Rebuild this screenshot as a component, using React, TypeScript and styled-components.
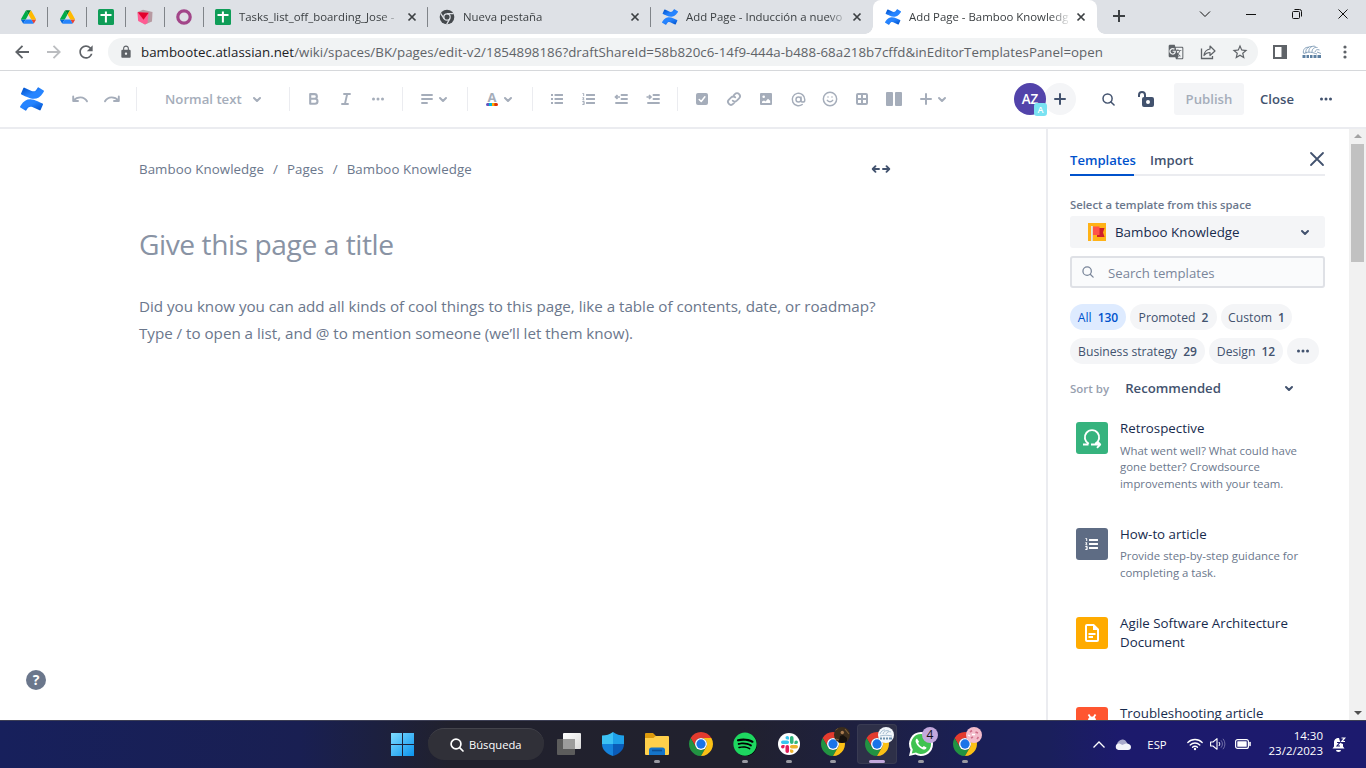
import React from 'react';
import styled, { createGlobalStyle } from 'styled-components';
import { AtSign, Smile } from 'lucide-react';
import { MdGTranslate, MdLock, MdStarOutline, MdRefresh } from 'react-icons/md';
import { FaSpotify } from 'react-icons/fa';

const Global = createGlobalStyle`
  * { box-sizing: border-box; }
  body {
    margin: 0;
    overflow: hidden;
    background: #fff;
    font-family: "Open Sans", "Noto Sans", sans-serif;
  }
  svg { display: block; flex: none; overflow: visible; }
`;

/* ---------- shared pieces ---------- */

const Screen = styled.div`
  width: 1366px;
  height: 768px;
  display: flex;
  flex-direction: column;
  overflow: hidden;
`;

const Slot = styled.div<{ $w?: number }>`
  flex: none;
  width: ${(p) => p.$w ?? 32}px;
  height: 32px;
  display: flex;
  align-items: center;
  justify-content: center;
`;

const Text = styled.span<{ $size: number; $color: string; $weight?: number; $ls?: number }>`
  font-size: ${(p) => p.$size}px;
  color: ${(p) => p.$color};
  font-weight: ${(p) => p.$weight ?? 400};
  letter-spacing: ${(p) => p.$ls ?? 0}px;
  white-space: nowrap;
`;

type SvgProps = { w?: number; h?: number; box?: string; children: React.ReactNode };
const Svg = ({ w = 16, h, box, children }: SvgProps) => (
  <svg width={w} height={h ?? w} viewBox={box ?? `0 0 ${w} ${h ?? w}`} fill="none">
    {children}
  </svg>
);

const ConfluenceLogo = ({ size }: { size: number }) => (
  <Svg w={size} box="0 0 24 24">
    <defs>
      <linearGradient id="cfLow" x1="1" y1="0.9" x2="0.3" y2="0.2">
        <stop offset="0" stopColor="#0052cc" />
        <stop offset="0.7" stopColor="#2684ff" />
      </linearGradient>
      <linearGradient id="cfTop" x1="0" y1="0.1" x2="0.7" y2="0.8">
        <stop offset="0" stopColor="#0052cc" />
        <stop offset="0.7" stopColor="#2684ff" />
      </linearGradient>
    </defs>
    <path
      fill="url(#cfLow)"
      d="M.87 18.257c-.248.382-.53.875-.763 1.245a.764.764 0 0 0 .255 1.04l4.965 3.054a.764.764 0 0 0 1.058-.26c.199-.332.454-.763.733-1.221 1.967-3.247 3.945-2.853 7.508-1.146l4.957 2.337a.764.764 0 0 0 1.028-.382l2.364-5.346a.764.764 0 0 0-.382-1 599.851 599.851 0 0 1-4.965-2.361C10.911 10.97 5.224 11.185.87 18.257z"
    />
    <path
      fill="url(#cfTop)"
      d="M23.131 5.743c.249-.405.531-.875.764-1.25a.764.764 0 0 0-.256-1.034L18.675.404a.764.764 0 0 0-1.058.26c-.195.335-.451.763-.734 1.225-1.966 3.246-3.945 2.85-7.508 1.146L4.437.694a.764.764 0 0 0-1.027.382L1.046 6.422a.764.764 0 0 0 .382 1c1.039.49 3.105 1.467 4.965 2.361 6.698 3.246 12.392 3.029 16.738-4.04z"
    />
  </Svg>
);

const Chevron = ({ color, size = 8, sw = 2 }: { color: string; size?: number; sw?: number }) => (
  <Svg w={size} h={size / 2 + 1} box="0 0 8 5">
    <path d="M1 1l3 3 3-3" stroke={color} strokeWidth={sw} strokeLinecap="round" strokeLinejoin="round" />
  </Svg>
);

const Dots = ({ color }: { color: string }) => (
  <Svg w={12} h={4}>
    <circle cx="1.5" cy="2" r="1.5" fill={color} />
    <circle cx="6" cy="2" r="1.5" fill={color} />
    <circle cx="10.5" cy="2" r="1.5" fill={color} />
  </Svg>
);

const Magnifier = ({ color, size = 14, sw = 1.6 }: { color: string; size?: number; sw?: number }) => (
  <Svg w={size} box="0 0 14 14">
    <circle cx="6" cy="6" r="4.9" stroke={color} strokeWidth={sw} />
    <path d="M9.6 9.6l3.4 3.4" stroke={color} strokeWidth={sw} strokeLinecap="round" />
  </Svg>
);

const ChromeLogo = ({ size = 24 }: { size?: number }) => (
  <Svg w={size} box="0 0 48 48">
    <path fill="#e33b2e" d="M24 12H44.78A24 24 0 0 0 3.22 12L13.61 30A12 12 0 0 1 24 12z" />
    <path fill="#229342" d="M13.61 30L3.22 12A24 24 0 0 0 24 48L34.39 30A12 12 0 0 1 13.61 30z" />
    <path fill="#fbc116" d="M34.39 30L24 48A24 24 0 0 0 44.78 12H24A12 12 0 0 1 34.39 30z" />
    <circle cx="24" cy="24" r="12" fill="#fff" />
    <circle cx="24" cy="24" r="9.3" fill="#1a73e8" />
  </Svg>
);

/* ---------- browser tabs ---------- */

const TabStrip = styled.div`
  flex: none;
  height: 34px;
  padding-left: 9px;
  background: #dee1e6;
  display: flex;
`;

const PinnedTab = styled.div`
  flex: none;
  width: 39px;
  height: 34px;
  padding-right: 1px;
  display: flex;
  align-items: center;
  justify-content: center;
  background: linear-gradient(#808489, #808489) 38px 7px / 1px 20px no-repeat;
`;

const Tab = styled.div<{ $w: number; $active?: boolean; $line?: boolean }>`
  flex: none;
  position: relative;
  width: ${(p) => p.$w}px;
  height: 34px;
  padding: 0 12px 0 ${(p) => (p.$active ? 12 : 11)}px;
  display: flex;
  align-items: center;
  border-radius: 8px 8px 0 0;
  background: ${(p) =>
    p.$active
      ? '#fff'
      : p.$line
        ? `linear-gradient(#808489, #808489) ${p.$w - 1}px 7px / 1px 20px no-repeat`
        : 'none'};
  ${(p) =>
    p.$active &&
    `&::before, &::after {
      content: "";
      position: absolute;
      bottom: 0;
      width: 8px;
      height: 8px;
    }
    &::before { left: -8px; background: radial-gradient(circle at 0 0, transparent 7.5px, #fff 8px); }
    &::after { right: -8px; background: radial-gradient(circle at 100% 0, transparent 7.5px, #fff 8px); }`}
`;

const TabTitle = styled.div<{ $ls?: number }>`
  width: 160px;
  margin-left: 8px;
  white-space: nowrap;
  font-size: 11.4px;
  line-height: 18px;
  letter-spacing: ${(p) => p.$ls ?? 0}px;
  color: #3c4043;
  mask-image: linear-gradient(90deg, #000 142px, transparent 162px);
`;

const TabClose = styled.div`
  flex: none;
  margin-left: auto;
  width: 8px;
`;

const WindowControls = styled.div`
  margin-left: auto;
  height: 28px;
  display: flex;
  align-items: center;
`;

const DriveIcon = () => (
  <Svg w={15} h={14} box="0 0 87.3 78">
    <path fill="#0066da" d="M6.6 66.85l3.85 6.65c.8 1.4 1.95 2.5 3.3 3.3L27.5 53H0c0 1.55.4 3.1 1.2 4.5z" />
    <path fill="#00ac47" d="M43.65 25L29.9 1.2c-1.35.8-2.5 1.9-3.3 3.3L1.2 48.5A9 9 0 0 0 0 53h27.5z" />
    <path fill="#ea4335" d="M73.55 76.8c1.35-.8 2.5-1.9 3.3-3.3l1.6-2.75L86.1 57.5c.8-1.4 1.2-2.95 1.2-4.5H59.8l5.85 11.5z" />
    <path fill="#00832d" d="M43.65 25L57.4 1.2C56.05.4 54.5 0 52.9 0H34.4c-1.6 0-3.15.45-4.5 1.2z" />
    <path fill="#2684fc" d="M59.8 53H27.5L13.75 76.8c1.35.8 2.9 1.2 4.5 1.2h50.8c1.6 0 3.15-.45 4.5-1.2z" />
    <path fill="#ffba00" d="M73.4 26.5l-12.7-22c-.8-1.4-1.95-2.5-3.3-3.3L43.65 25 59.8 53h27.45c0-1.55-.4-3.1-1.2-4.5z" />
  </Svg>
);

const SheetIcon = () => (
  <Svg w={16}>
    <rect width="16" height="16" rx="1.5" fill="#0f9d58" />
    <path d="M7.9 2.5v11M2.5 5.9h11" stroke="#fff" strokeWidth="2" />
  </Svg>
);

const CubeIcon = () => (
  <Svg w={16}>
    <path d="M6 .8L15.500 3 15 12.500 8 15.500 1 11 .6 3z" fill="#b79aa2" />
    <path d="M.6 3.200l11 .8L10.500 14 8 15.500 1.200 12z" fill="#ff5c93" />
    <path d="M.8 3.200l10.900 .6L6.500 10.800z" fill="#e3002b" />
  </Svg>
);

const CrossIcon = ({ color = '#3c4043', size = 8, sw = 1.7 }: { color?: string; size?: number; sw?: number }) => (
  <Svg w={size}>
    <path d={`M.5 .5L${size - 0.5} ${size - 0.5}M${size - 0.5} .5L.5 ${size - 0.5}`} stroke={color} strokeWidth={sw} />
  </Svg>
);

const DarkChrome = () => (
  <Svg w={16} box="0 0 48 48">
    <circle cx="24" cy="24" r="22" fill="#45494d" />
    <circle cx="24" cy="24" r="9.5" stroke="#dee1e6" strokeWidth="3.6" />
    <path d="M24 14H44M15.5 29.5L5 13M32.500 29L23 46" stroke="#dee1e6" strokeWidth="3.6" />
  </Svg>
);

const Tabs = () => (
  <TabStrip>
    <PinnedTab><DriveIcon /></PinnedTab>
    <PinnedTab><DriveIcon /></PinnedTab>
    <PinnedTab><SheetIcon /></PinnedTab>
    <PinnedTab><CubeIcon /></PinnedTab>
    <PinnedTab>
      <Svg w={16}><circle cx="8" cy="8" r="6.2" stroke="#a24689" strokeWidth="3.2" /></Svg>
    </PinnedTab>
    <Tab $w={224} $line>
      <SheetIcon />
      <TabTitle>Tasks_list_off_boarding_Jose -</TabTitle>
      <TabClose><CrossIcon /></TabClose>
    </Tab>
    <Tab $w={223} $line>
      <DarkChrome />
      <TabTitle>Nueva pestaña</TabTitle>
      <TabClose><CrossIcon /></TabClose>
    </Tab>
    <Tab $w={222}>
      <ConfluenceLogo size={16} />
      <TabTitle>Add Page - Inducción a nuevo</TabTitle>
      <TabClose><CrossIcon /></TabClose>
    </Tab>
    <Tab $w={224} $active>
      <ConfluenceLogo size={16} />
      <TabTitle>Add Page - Bamboo Knowledg</TabTitle>
      <TabClose><CrossIcon /></TabClose>
    </Tab>
    <Slot $w={44}>
      <Svg w={12}><path d="M6 0v12M0 6h12" stroke="#3c4043" strokeWidth="2" /></Svg>
    </Slot>
    <WindowControls>
      <Slot $w={46}><Svg w={10} h={6}><path d="M0 .5l5 5 5-5" stroke="#111" /></Svg></Slot>
      <Slot $w={46}><Svg w={10} h={1}><path d="M0 .5h10" stroke="#111" /></Svg></Slot>
      <Slot $w={46}>
        <Svg w={10}>
          <rect x=".5" y="2.5" width="7" height="7" rx="1" stroke="#111" />
          <path d="M2.500 .5H7.500a2 2 0 0 1 2 2V7.500" stroke="#111" />
        </Svg>
      </Slot>
      <Slot $w={46}><CrossIcon color="#111" size={10} sw={1} /></Slot>
    </WindowControls>
  </TabStrip>
);

/* ---------- address bar ---------- */

const AddressRow = styled.div`
  flex: none;
  height: 37px;
  padding: 0 5px 1px 6px;
  border-bottom: 1px solid #d6d8db;
  display: flex;
  align-items: center;
`;

const UrlPill = styled.div`
  flex: none;
  width: 1150px;
  height: 28px;
  margin-left: 6px;
  padding: 0 2px 0 11px;
  border-radius: 14px;
  background: #f1f3f4;
  display: flex;
  align-items: center;
`;

const Url = styled.div`
  margin: 0 auto 0 8px;
  white-space: nowrap;
  font-size: 13.3px;
  line-height: 20px;
  color: #5f6368;
  letter-spacing: 0.035px;
`;

const Host = styled.span`
  color: #202124;
`;

const AddressBar = () => (
  <AddressRow>
    <Slot>
      <Svg w={14}><path d="M14 7H1.500M7.500 .8L1.300 7l6.200 6.200" stroke="#5f6368" strokeWidth="1.800" /></Svg>
    </Slot>
    <Slot>
      <Svg w={14}><path d="M0 7H12.500M6.500 .8L12.700 7l-6.200 6.200" stroke="#bbbdc0" strokeWidth="1.800" /></Svg>
    </Slot>
    <Slot><MdRefresh size={20} color="#5f6368" /></Slot>
    <UrlPill>
      <MdLock size={14} color="#5f6368" />
      <Url>
        <Host>bambootec.atlassian.net</Host>
        /wiki/spaces/BK/pages/edit-v2/1854898186?draftShareId=58b820c6-14f9-444a-b488-68a218b7cffd&amp;inEditorTemplatesPanel=open
      </Url>
      <Slot><MdGTranslate size={16} color="#5f6368" /></Slot>
      <Slot>
        <Svg w={16}>
          <path d="M1.500 4.500V14.500H12.500V12" stroke="#5f6368" strokeWidth="1.300" />
          <path d="M4 11.500C4.500 7.500 6.500 5.500 10 5V2l5 5-5 4.500V8.500C7.500 8.500 5.500 9.500 4 11.500z" stroke="#5f6368" strokeWidth="1.200" strokeLinejoin="round" />
        </Svg>
      </Slot>
      <Slot><MdStarOutline size={18} color="#5f6368" /></Slot>
    </UrlPill>
    <Slot $w={44}>
      <Svg w={14}><path fillRule="evenodd" fill="#5f6368" d="M0 0H14V14H0zM2 2V12H8.500V2z" /></Svg>
    </Slot>
    <Slot $w={20}>
      <Svg w={20} h={16}>
        <path d="M1.500 9.500C.5 5 4 2.500 7 3.500M4 9.500c-1-4 2-7.500 6-7M7 8.500c-1-4 3-7.500 6.500-6M10 8c0-3 2-5 5.500-4.500M13 8c.5-2 2-3 4.500-2M2 9.500c4-2.500 9-1 13 .5M15 8l4 1.500" stroke="#7e9bb5" strokeWidth=".9" />
        <path d="M.5 12.500h3M4.500 12.500h2.500M8 12.500h2.500M11.500 12.500h3M15.500 12.500h3.500" stroke="#5d80a2" strokeWidth="3" />
      </Svg>
    </Slot>
    <Slot $w={46}>
      <Svg w={4} h={14}>
        <circle cx="2" cy="2" r="1.600" fill="#5f6368" />
        <circle cx="2" cy="7" r="1.600" fill="#5f6368" />
        <circle cx="2" cy="12" r="1.600" fill="#5f6368" />
      </Svg>
    </Slot>
  </AddressRow>
);

/* ---------- editor toolbar ---------- */

const MUTED = '#a5adba';
const DARK = '#42526e';

const ToolbarRow = styled.div`
  flex: none;
  height: 58px;
  padding: 0 24px 0 16px;
  border-bottom: 2px solid #ebecf0;
  display: flex;
  align-items: center;
`;

const Separator = styled.div`
  flex: none;
  width: 1px;
  height: 24px;
  margin: 0 8px;
  background: #ebecf0;
`;

const MenuButton = styled.div`
  flex: none;
  width: 48px;
  padding: 0 8px;
  display: flex;
  align-items: center;
`;

const MenuIcon = styled.div`
  width: 16px;
  height: 16px;
  display: flex;
  align-items: center;
  justify-content: center;
`;

const StyleSelect = styled.div`
  flex: none;
  width: 136px;
  padding: 0 20px;
  display: flex;
  align-items: center;
  justify-content: space-between;
`;

const ToolbarEnd = styled.div`
  margin-left: auto;
  display: flex;
  align-items: center;
`;

const Avatar = styled.div`
  position: relative;
  z-index: 1;
  width: 32px;
  height: 32px;
  border-radius: 50%;
  background: #5243aa;
  color: #fff;
  font-size: 13.5px;
  font-weight: 600;
  display: flex;
  align-items: center;
  justify-content: center;
`;

const AvatarBadge = styled.div`
  position: absolute;
  left: 20px;
  top: 20px;
  width: 13px;
  height: 13px;
  border-radius: 3px;
  background: #79e2f2;
  font-size: 9px;
  line-height: 14px;
  text-align: center;
`;

const InviteButton = styled.div`
  width: 32px;
  height: 32px;
  margin: 0 16px 0 -2px;
  border-radius: 50%;
  background: #f4f5f7;
  display: flex;
  align-items: center;
  justify-content: center;
`;

const ActionButton = styled.div<{ $w: number; $filled?: boolean }>`
  width: ${(p) => p.$w}px;
  height: 32px;
  margin-right: 8px;
  border-radius: 3px;
  background: ${(p) => (p.$filled ? '#f4f5f7' : 'transparent')};
  display: flex;
  align-items: center;
  justify-content: center;
`;

const LetterColor = styled.div`
  width: 12px;
  display: flex;
  flex-direction: column;
  align-items: center;
  font-size: 13px;
  font-weight: 700;
  line-height: 11px;
  color: ${MUTED};
`;

const UndoIcon = ({ flip }: { flip?: boolean }) => (
  <Svg w={16} h={8}>
    <g transform={flip ? 'matrix(-1 0 0 1 16 0)' : undefined}>
      <path d="M1.200 1.500V6H6M1.600 5.500C5 1.500 12 .8 15 6.300" stroke={MUTED} strokeWidth="1.900" strokeLinecap="round" strokeLinejoin="round" />
    </g>
  </Svg>
);

const NumberedList = ({ color }: { color: string }) => (
  <Svg w={14} h={12}>
    <path d="M5 2h7M5 6h7M5 10h7" stroke={color} strokeWidth="1.900" strokeLinecap="square" />
    <path d="M.5 .5h1.200V3M.3 4.800h1.700L.8 6.800h1.500M.3 8.500h1.900v3H.3M.8 10h1.200" stroke={color} strokeWidth="1" />
  </Svg>
);

const PlusIcon = ({ color }: { color: string }) => (
  <Svg w={12}><path d="M6 1v10M1 6h10" stroke={color} strokeWidth="2" strokeLinecap="round" /></Svg>
);

const Toolbar = () => (
  <ToolbarRow>
    <Slot><ConfluenceLogo size={24} /></Slot>
    <Slot $w={16} />
    <Slot><UndoIcon /></Slot>
    <Slot><UndoIcon flip /></Slot>
    <Separator />
    <StyleSelect>
      <Text $size={13.2} $color={MUTED} $weight={600}>Normal text</Text>
      <Chevron color={MUTED} />
    </StyleSelect>
    <Separator />
    <Slot>
      <Svg w={10} h={12}>
        <path d="M1.200 1.100H5.500a2.300 2.300 0 0 1 0 4.700H1.200zM1.200 5.800H6a2.500 2.500 0 0 1 0 5H1.200z" stroke={MUTED} strokeWidth="2.100" strokeLinejoin="round" />
      </Svg>
    </Slot>
    <Slot>
      <Svg w={10} h={12}>
        <path d="M3 1h6M1 11h6M6.200 1L3.900 11" stroke={MUTED} strokeWidth="1.900" strokeLinecap="round" />
      </Svg>
    </Slot>
    <Slot><Dots color={MUTED} /></Slot>
    <Separator />
    <MenuButton>
      <MenuIcon>
        <Svg w={12} h={10}><path d="M1 1h10M1 5h10M1 9h5" stroke={MUTED} strokeWidth="1.900" strokeLinecap="round" /></Svg>
      </MenuIcon>
      <MenuIcon><Chevron color={MUTED} /></MenuIcon>
    </MenuButton>
    <Separator />
    <MenuButton>
      <MenuIcon>
        <LetterColor>
          A
          <Svg w={12} h={3}>
            <rect width="4" height="3" rx="1.500" fill="#6554c0" />
            <rect x="1.500" width="2" height="3" fill="#6554c0" />
            <rect x="3" width="3" height="3" fill="#00b8d9" />
            <rect x="6" width="3" height="3" fill="#ffab00" />
            <rect x="8.500" width="3.500" height="3" rx="1.500" fill="#de350b" />
            <rect x="8.500" width="1.500" height="3" fill="#de350b" />
          </Svg>
        </LetterColor>
      </MenuIcon>
      <MenuIcon><Chevron color={MUTED} /></MenuIcon>
    </MenuButton>
    <Separator />
    <Slot>
      <Svg w={12} h={10}>
        <path d="M4.500 1h6.500M4.500 5h6.500M4.500 9h6.500" stroke={MUTED} strokeWidth="1.900" strokeLinecap="square" />
        <path d="M0 1h2M0 5h2M0 9h2" stroke={MUTED} strokeWidth="1.900" />
      </Svg>
    </Slot>
    <Slot><NumberedList color={MUTED} /></Slot>
    <Slot>
      <Svg w={14} h={10}>
        <path d="M7 1h5.500M7 5h5.500M1.500 9h11" stroke={MUTED} strokeWidth="1.900" strokeLinecap="round" transform="translate(.5 0)" />
        <path d="M6 3H1.500M3.500 1l-2 2 2 2" stroke={MUTED} strokeWidth="1.700" />
      </Svg>
    </Slot>
    <Slot>
      <Svg w={14} h={10}>
        <path d="M7 1h5.500M7 5h5.500M1.500 9h11" stroke={MUTED} strokeWidth="1.900" strokeLinecap="round" transform="translate(.5 0)" />
        <path d="M.5 3H5M3 1l2 2-2 2" stroke={MUTED} strokeWidth="1.700" />
      </Svg>
    </Slot>
    <Separator />
    <Slot>
      <Svg w={12}>
        <rect width="12" height="12" rx="2" fill={MUTED} />
        <path d="M3.200 6.500l2 2L8.900 3.800" stroke="#fff" strokeWidth="1.500" strokeLinecap="round" strokeLinejoin="round" />
      </Svg>
    </Slot>
    <Slot>
      <Svg w={14}>
        <path d="M5.700 8.600a2.900 2.900 0 0 0 4.100.1l2.300-2.400a2.950 2.950 0 0 0-4.200-4.200L6.700 3.300M8.300 5.400a2.900 2.900 0 0 0-4.100-.1L1.900 7.700a2.950 2.950 0 0 0 4.200 4.200l1.200-1.200" stroke={MUTED} strokeWidth="1.800" strokeLinecap="round" />
      </Svg>
    </Slot>
    <Slot>
      <Svg w={12}>
        <rect width="12" height="12" rx="1" fill={MUTED} />
        <circle cx="3.700" cy="3.700" r="1.300" fill="#fff" />
        <path d="M2 10V8.500l2-1 1.500 1L8 5.800l2.200 2V10z" fill="#fff" />
      </Svg>
    </Slot>
    <Slot><AtSign size={15} color={MUTED} strokeWidth={2.300} /></Slot>
    <Slot><Smile size={16} color={MUTED} strokeWidth={2.200} /></Slot>
    <Slot>
      <Svg w={12}>
        <path fillRule="evenodd" fill={MUTED} d="M2 0H10a2 2 0 0 1 2 2V10a2 2 0 0 1-2 2H2a2 2 0 0 1-2-2V2A2 2 0 0 1 2 0zM2 2V5H5V2zM7 2V5H10V2zM2 7V10H5V7zM7 7V10H10V7z" />
      </Svg>
    </Slot>
    <Slot>
      <Svg w={16} h={14}>
        <rect width="7" height="14" rx="1" fill={MUTED} />
        <rect x="9" width="7" height="14" rx="1" fill={MUTED} />
      </Svg>
    </Slot>
    <MenuButton>
      <MenuIcon><PlusIcon color={MUTED} /></MenuIcon>
      <MenuIcon><Chevron color={MUTED} /></MenuIcon>
    </MenuButton>
    <ToolbarEnd>
      <Avatar>
        AZ
        <AvatarBadge>A</AvatarBadge>
      </Avatar>
      <InviteButton><PlusIcon color={DARK} /></InviteButton>
      <Slot><Magnifier color={DARK} size={13} /></Slot>
      <Slot $w={6} />
      <Slot>
        <Svg w={16} h={16}>
          <path d="M1 6V4a3 3 0 0 1 6 0V7" stroke={DARK} strokeWidth="2" />
          <path fillRule="evenodd" fill={DARK} d="M6 6H14a2 2 0 0 1 2 2V14a2 2 0 0 1-2 2H6a2 2 0 0 1-2-2V8A2 2 0 0 1 6 6zM10 9a2 2 0 1 0 0 4 2 2 0 0 0 0-4z" />
        </Svg>
      </Slot>
      <Slot $w={12} />
      <ActionButton $w={70} $filled><Text $size={13.2} $color={MUTED} $weight={600}>Publish</Text></ActionButton>
      <ActionButton $w={50}><Text $size={13.1} $color={DARK} $weight={600}>Close</Text></ActionButton>
      <Slot><Dots color={DARK} /></Slot>
    </ToolbarEnd>
  </ToolbarRow>
);

/* ---------- editor canvas ---------- */

const Workspace = styled.div`
  height: 591px;
  flex: none;
  display: flex;
`;

const Editor = styled.main`
  flex: none;
  width: 1046px;
  padding: 30px 155px 0 139px;
  display: flex;
  flex-direction: column;
`;

const Breadcrumbs = styled.div`
  height: 20px;
  display: flex;
  align-items: center;
  gap: 9px;
`;

const WidthToggle = styled.div`
  margin-left: auto;
`;

const PageTitle = styled.h1`
  margin: 45px 0 0;
  height: 40px;
  font-size: 28.2px;
  font-weight: 400;
  line-height: 40px;
  letter-spacing: -0.45px;
  color: #8993a4;
  white-space: nowrap;
`;

const Hint = styled.p`
  margin: 29px 0 0;
  font-size: 15.2px;
  line-height: 27px;
  letter-spacing: -0.025px;
  color: #6b778c;
  white-space: nowrap;
`;

const HelpButton = styled.div`
  margin: auto 0 30px -113px;
  width: 20px;
  height: 20px;
  border-radius: 50%;
  background: #6b778c;
  color: #fff;
  font-size: 14px;
  font-weight: 700;
  line-height: 20px;
  text-align: center;
`;

const Crumb = ({ children }: { children: string }) => (
  <Text $size={13.3} $ls={0.06} $color="#6b778c">{children}</Text>
);

const EditorPane = () => (
  <Editor>
    <Breadcrumbs>
      <Crumb>Bamboo Knowledge</Crumb>
      <Crumb>/</Crumb>
      <Crumb>Pages</Crumb>
      <Crumb>/</Crumb>
      <Crumb>Bamboo Knowledge</Crumb>
      <WidthToggle>
        <Svg w={20} h={8}>
          <path d="M8 4H2M4.500 1.200L1.700 4l2.800 2.800M12 4h6M15.500 1.200L18.300 4l-2.800 2.800" stroke={DARK} strokeWidth="1.900" strokeLinecap="round" strokeLinejoin="round" />
        </Svg>
      </WidthToggle>
    </Breadcrumbs>
    <PageTitle>Give this page a title</PageTitle>
    <Hint>
      Did you know you can add all kinds of cool things to this page, like a table of contents, date, or roadmap?
      <br />
      Type / to open a list, and @ to mention someone (we’ll let them know).
    </Hint>
    <HelpButton>?</HelpButton>
  </Editor>
);

/* ---------- templates panel ---------- */

const Panel = styled.aside`
  flex: none;
  width: 303px;
  height: 591px;
  overflow: hidden;
  padding: 15px 24px 0 22px;
  border-left: 2px solid #ebecf0;
`;

const PanelTabs = styled.div`
  height: 32px;
  border-bottom: 2px solid #ebecf0;
  display: flex;
`;

const PanelTab = styled.div<{ $active?: boolean }>`
  height: 32px;
  width: 64px;
  margin-right: 16px;
  line-height: 32.5px;
  font-size: 13.1px;
  font-weight: 600;
  white-space: nowrap;
  color: ${(p) => (p.$active ? '#0052cc' : DARK)};
  border-bottom: 2px solid ${(p) => (p.$active ? '#0052cc' : 'transparent')};
`;

const PanelClose = styled.div`
  margin: 8px 1px 0 auto;
`;

const FieldLabel = styled.div`
  margin-top: 19px;
  height: 21px;
  line-height: 20px;
  font-size: 11.3px;
  font-weight: 600;
  color: #6b778c;
`;

const SpaceSelect = styled.div`
  height: 32px;
  padding: 0 16px 0 18px;
  border-radius: 3px;
  background: #f4f5f7;
  display: flex;
  align-items: center;
  justify-content: space-between;
`;

const SpaceName = styled.div`
  display: flex;
  align-items: center;
  gap: 9px;
`;

const SearchField = styled.div`
  height: 32px;
  margin-top: 8px;
  padding-left: 10px;
  border: 2px solid #dfe1e6;
  border-radius: 3px;
  background: #fafbfc;
  display: flex;
  align-items: center;
  gap: 14px;
`;

const SearchHint = styled.div`
  padding-top: 2px;
  line-height: 18px;
  font-size: 13.2px;
  color: #7a869a;
`;

const Chips = styled.div`
  margin-top: 16px;
  display: flex;
  flex-wrap: wrap;
  gap: 8px 4px;
`;

const Chip = styled.div<{ $w: number; $active?: boolean }>`
  width: ${(p) => p.$w}px;
  height: 26px;
  border-radius: 13px;
  background: ${(p) => (p.$active ? '#deebff' : '#f4f5f7')};
  color: ${(p) => (p.$active ? '#0052cc' : DARK)};
  font-size: 12.200px;
  display: flex;
  align-items: center;
  justify-content: center;
  gap: 6px;
  white-space: nowrap;
`;

const Count = styled.span`
  font-weight: 600;
  font-size: 12px;
`;

const SortRow = styled.div`
  height: 20px;
  margin-top: 14px;
  padding-right: 32px;
  display: flex;
  align-items: center;
  gap: 16px;
`;

const SortChevron = styled.div`
  margin-left: auto;
`;

const TemplateList = styled.div`
  padding: 24px 0 0 6px;
`;

const TemplateRow = styled.div<{ $h: number }>`
  height: ${(p) => p.$h}px;
  display: flex;
  gap: 12px;
`;

const TemplateIcon = styled.div<{ $bg: string }>`
  flex: none;
  width: 32px;
  height: 32px;
  border-radius: 3px;
  background: ${(p) => p.$bg};
  display: flex;
  align-items: center;
  justify-content: center;
`;

const TemplateText = styled.div`
  margin-top: -3px;
`;

const TemplateTitle = styled.div`
  width: 190px;
  font-size: 13.3px;
  line-height: 19px;
  color: #172b4d;
`;

const TemplateDesc = styled.div<{ $gap?: number }>`
  margin-top: ${(p) => p.$gap ?? 4.5}px;
  white-space: pre;
  font-size: 11.400px;
  line-height: 16.500px;
  letter-spacing: -0.01px;
  color: #6b778c;
`;

const Scrollbar = styled.div`
  flex: none;
  width: 17px;
  padding: 5px 0;
  background: #f1f1f1;
  display: flex;
  flex-direction: column;
  align-items: center;
`;

const Thumb = styled.div`
  width: 13px;
  height: 118px;
  margin: 6px 0 auto;
  background: #c1c1c1;
`;

const TemplatesPanel = () => (
  <Panel>
    <PanelTabs>
      <PanelTab $active>Templates</PanelTab>
      <PanelTab>Import</PanelTab>
      <PanelClose>
        <Svg w={14}><path d="M1 1l12 12M13 1L1 13" stroke={DARK} strokeWidth="1.800" strokeLinecap="round" /></Svg>
      </PanelClose>
    </PanelTabs>
    <FieldLabel>Select a template from this space</FieldLabel>
    <SpaceSelect>
      <SpaceName>
        <Svg w={18}>
          <rect width="18" height="18" fill="#ffb217" />
          <path d="M3 3h1.800v15H3z" fill="#dfe5ea" />
          <path d="M9 5h7.500L15 9.500l1.500 4.500H9z" fill="#cf1f2b" />
          <path d="M5 3.500h6.500v8.500H5z" fill="#ff5348" />
        </Svg>
        <Text $size={13.35} $color="#172b4d">Bamboo Knowledge</Text>
      </SpaceName>
      <Chevron color={DARK} />
    </SpaceSelect>
    <SearchField>
      <Magnifier color="#7a869a" size={12} sw={1.500} />
      <SearchHint>Search templates</SearchHint>
    </SearchField>
    <Chips>
      <Chip $w={56} $active>All <Count>130</Count></Chip>
      <Chip $w={87}>Promoted <Count>2</Count></Chip>
      <Chip $w={71}>Custom <Count>1</Count></Chip>
      <Chip $w={135}>Business strategy <Count>29</Count></Chip>
      <Chip $w={74}>Design <Count>12</Count></Chip>
      <Chip $w={32}><Dots color={DARK} /></Chip>
    </Chips>
    <SortRow>
      <Text $size={11.5} $color="#97a0af" $weight={600}>Sort by</Text>
      <Text $size={13.2} $color={DARK} $weight={600}>Recommended</Text>
      <SortChevron><Chevron color={DARK} /></SortChevron>
    </SortRow>
    <TemplateList>
      <TemplateRow $h={106}>
        <TemplateIcon $bg="#36b37e">
          <Svg w={18}>
            <path d="M0 15.500H5.500M5.800 14.800A7.200 7.200 0 1 1 12.200 14.800M8 15.500H17M14 12.200l3.200 3.300L14 18.800" stroke="#fff" strokeWidth="1.900" strokeLinejoin="round" />
          </Svg>
        </TemplateIcon>
        <TemplateText>
          <TemplateTitle>Retrospective</TemplateTitle>
          <TemplateDesc>{'What went well? What could have\ngone better? Crowdsource\nimprovements with your team.'}</TemplateDesc>
        </TemplateText>
      </TemplateRow>
      <TemplateRow $h={89}>
        <TemplateIcon $bg="#5e6c84"><NumberedList color="#fff" /></TemplateIcon>
        <TemplateText>
          <TemplateTitle>How-to article</TemplateTitle>
          <TemplateDesc $gap={4}>{'Provide step-by-step guidance for\ncompleting a task.'}</TemplateDesc>
        </TemplateText>
      </TemplateRow>
      <TemplateRow $h={90}>
        <TemplateIcon $bg="#ffab00">
          <Svg w={14} h={18}>
            <path d="M1 2a1 1 0 0 1 1-1H8.500L13 5.500V16a1 1 0 0 1-1 1H2a1 1 0 0 1-1-1z" stroke="#fff" strokeWidth="2" strokeLinejoin="round" />
            <path d="M8 1V6H13z" fill="#fff" />
            <path d="M3.500 10h7M3.500 13h4.500" stroke="#fff" strokeWidth="1.800" />
          </Svg>
        </TemplateIcon>
        <TemplateText>
          <TemplateTitle>Agile Software Architecture Document</TemplateTitle>
        </TemplateText>
      </TemplateRow>
      <TemplateRow $h={60}>
        <TemplateIcon $bg="#ff5630">
          <Svg w={14} h={18}>
            <path d="M3.500 .5l2 3M10.500 .5l-2 3" stroke="#fff" strokeWidth="1.800" />
            <path d="M3 6.500a4 4 0 0 1 8 0V13a3.500 3.500 0 0 1-8 0z" fill="#fff" />
            <path d="M0 13L3.500 11M14 13L10.500 11M0 9h14" stroke="#fff" strokeWidth="1.600" />
          </Svg>
        </TemplateIcon>
        <TemplateText>
          <TemplateTitle>Troubleshooting article</TemplateTitle>
        </TemplateText>
      </TemplateRow>
    </TemplateList>
  </Panel>
);

/* ---------- taskbar ---------- */

const TaskbarRow = styled.div`
  flex: none;
  height: 48px;
  border-top: 1px solid #3d3f55;
  padding: 0 11px 1px 380px;
  background: linear-gradient(90deg, #17205c 0, #191f52 300px, #1c2040 375px, #21212d 450px, #21212e 740px, #1e2040 860px, #1a1f56 970px, #1a1f5c 1050px, #1c1a6c 1120px, #1c1a6e 100%);
  display: flex;
  align-items: center;
`;

const SearchPill = styled.div`
  flex: none;
  width: 116px;
  height: 32px;
  margin: 0 3px 0 4px;
  padding-left: 22px;
  border-radius: 16px;
  background: #303038;
  border-top: 1px solid #43434b;
  display: flex;
  align-items: center;
  gap: 5px;
`;

const AppButton = styled.div<{ $active?: boolean; $running?: boolean }>`
  flex: none;
  position: relative;
  width: 40px;
  height: 40px;
  margin: 0 2px;
  border-radius: 4px;
  display: flex;
  align-items: center;
  justify-content: center;
  background: ${(p) => (p.$active ? '#2e3048' : 'transparent')};
  box-shadow: ${(p) => (p.$active ? 'inset 0 0 0 1px #393b52' : 'none')};
  &::after {
    content: "";
    display: ${(p) => (p.$active || p.$running ? 'block' : 'none')};
    position: absolute;
    bottom: 1px;
    left: ${(p) => (p.$active ? 12 : 17)}px;
    width: ${(p) => (p.$active ? 16 : 6)}px;
    height: 3px;
    border-radius: 2px;
    background: ${(p) => (p.$active ? '#c3a8dc' : '#9a9aa2')};
  }
`;

const AppBadge = styled.div<{ $bg: string }>`
  position: absolute;
  top: 3px;
  right: 3px;
  width: 16px;
  height: 16px;
  border-radius: 50%;
  overflow: hidden;
  background: ${(p) => p.$bg};
  color: #111;
  font-size: 12px;
  line-height: 16px;
  text-align: center;
`;

const Disc = styled.div<{ $bg: string; $size: number }>`
  width: ${(p) => p.$size}px;
  height: ${(p) => p.$size}px;
  border-radius: 50%;
  background: ${(p) => p.$bg};
  display: flex;
  align-items: center;
  justify-content: center;
`;

const Tray = styled.div`
  margin-left: auto;
  display: flex;
  align-items: center;
`;

const Clock = styled.div`
  width: 62px;
  margin-top: -2px;
  text-align: right;
  white-space: nowrap;
  font-size: 11.500px;
  line-height: 15.500px;
  color: #fff;
`;

const SlackLogo = () => (
  <Svg w={17} box="0 0 24 24">
    <path fill="#e01e5a" d="M5.042 15.165a2.528 2.528 0 0 1-2.52 2.523A2.528 2.528 0 0 1 0 15.165a2.527 2.527 0 0 1 2.522-2.52h2.520v2.520zM6.313 15.165a2.527 2.527 0 0 1 2.521-2.520 2.527 2.527 0 0 1 2.521 2.520v6.313A2.528 2.528 0 0 1 8.834 24a2.528 2.528 0 0 1-2.521-2.522v-6.313z" />
    <path fill="#36c5f0" d="M8.834 5.042a2.528 2.528 0 0 1-2.521-2.520A2.528 2.528 0 0 1 8.834 0a2.528 2.528 0 0 1 2.521 2.522v2.520H8.834zM8.834 6.313a2.528 2.528 0 0 1 2.521 2.521 2.528 2.528 0 0 1-2.521 2.521H2.522A2.528 2.528 0 0 1 0 8.834a2.528 2.528 0 0 1 2.522-2.521h6.312z" />
    <path fill="#2eb67d" d="M18.956 8.834a2.528 2.528 0 0 1 2.522-2.521A2.528 2.528 0 0 1 24 8.834a2.528 2.528 0 0 1-2.522 2.521h-2.522V8.834zM17.688 8.834a2.528 2.528 0 0 1-2.523 2.521 2.527 2.527 0 0 1-2.520-2.521V2.522A2.527 2.527 0 0 1 15.165 0a2.528 2.528 0 0 1 2.523 2.522v6.312z" />
    <path fill="#ecb22e" d="M15.165 18.956a2.528 2.528 0 0 1 2.523 2.522A2.528 2.528 0 0 1 15.165 24a2.527 2.527 0 0 1-2.520-2.522v-2.522h2.520zM15.165 17.688a2.527 2.527 0 0 1-2.520-2.523 2.526 2.526 0 0 1 2.520-2.520h6.313A2.527 2.527 0 0 1 24 15.165a2.528 2.528 0 0 1-2.522 2.523h-6.313z" />
  </Svg>
);

const Taskbar = () => (
  <TaskbarRow>
    <AppButton>
      <Svg w={23}>
        <defs>
          <linearGradient id="win" x1="0" y1="0" x2="23" y2="23" gradientUnits="userSpaceOnUse">
            <stop offset="0" stopColor="#7fdcff" />
            <stop offset="1" stopColor="#0a93ee" />
          </linearGradient>
        </defs>
        <path fill="url(#win)" d="M0 0h11v11H0zM12 0h11v11H12zM0 12h11v11H0zM12 12h11v11H12z" />
      </Svg>
    </AppButton>
    <SearchPill>
      <Magnifier color="#fff" size={14} sw={1.700} />
      <Text $size={11.2} $color="#fff" $weight={500}>Búsqueda</Text>
    </SearchPill>
    <AppButton>
      <Svg w={24} h={22}>
        <defs>
          <linearGradient id="tv" x1="0" y1="0" x2="1" y2="1">
            <stop offset="0" stopColor="#fff" />
            <stop offset="1" stopColor="#d9d9d9" />
          </linearGradient>
        </defs>
        <rect x="6" width="18" height="16" rx="1" fill="url(#tv)" />
        <rect y="6" width="18" height="16" rx="1" fill="#5c5c5c" />
        <rect x="6" y="6" width="12" height="10" fill="#9c9c9c" />
      </Svg>
    </AppButton>
    <AppButton>
      <Svg w={22} h={24}>
        <path d="M11 0c3 2.500 7 3.500 11 3.500V12H11z" fill="#1ea0e8" />
        <path d="M11 0C8 2.500 4 3.500 0 3.500V12h11z" fill="#3cc2f4" />
        <path d="M11 12h11c0 6-5 10-11 12z" fill="#0a5cb8" />
        <path d="M11 12H0c0 6 5 10 11 12z" fill="#1583dc" />
      </Svg>
    </AppButton>
    <AppButton $running>
      <Svg w={24} h={22}>
        <path d="M0 1a1 1 0 0 1 1-1H8l2.500 2.500V8H0z" fill="#dd9a0c" />
        <path d="M0 5H8.500l2-2H23a1 1 0 0 1 1 1V21a1 1 0 0 1-1 1H1a1 1 0 0 1-1-1z" fill="#ffd04b" />
        <path d="M4 22V17a2.500 2.500 0 0 1 2.500-2.500h11A2.500 2.500 0 0 1 20 17V22z" fill="#1574c9" />
        <path d="M7 17.500h10" stroke="#0d4f94" strokeWidth="1.600" />
      </Svg>
    </AppButton>
    <AppButton><ChromeLogo /></AppButton>
    <AppButton $running>
      <Disc $bg="#000" $size={23}><FaSpotify size={24} color="#1ed760" /></Disc>
    </AppButton>
    <AppButton $running>
      <Disc $bg="#fff" $size={22}><SlackLogo /></Disc>
    </AppButton>
    <AppButton $running>
      <ChromeLogo />
      <AppBadge $bg="#3a2c1c">
        <Svg w={16}>
          <path d="M4.500 16L6 9l3-1 4 3v5z" fill="#15110d" />
          <circle cx="8.300" cy="5.500" r="1.700" fill="#a97c50" />
          <path d="M0 4l4-3M11 2l4 5M2 12l3 1" stroke="#7a5c34" strokeWidth="1.200" />
        </Svg>
      </AppBadge>
    </AppButton>
    <AppButton $active>
      <ChromeLogo />
      <AppBadge $bg="#f2f6fa">
        <Svg w={16}>
          <path d="M2 7c1-3 3-4 5-4M5 7c1-3 3-4 6-3M8 7c1-2 3-3 5-2M2 9c4-1 8-1 12 0" stroke="#9db6cb" strokeWidth=".9" />
          <path d="M2 11.500h2M5 11.500h2M8 11.500h2M11 11.500h3" stroke="#6f92b0" strokeWidth="1.800" />
        </Svg>
      </AppBadge>
    </AppButton>
    <AppButton $running>
      <Svg w={24}>
        <path d="M12 0a12 12 0 1 1-5.600 22.600L0 24l1.500-6.200A12 12 0 0 1 12 0z" fill="#fff" />
        <path d="M12 2a10 10 0 1 1-5 18.600L2.800 21.500l1-4A10 10 0 0 1 12 2z" fill="#3fc351" />
        <path d="M8 6.500c-1.500.8-1.800 2.500-1 4.300 1.200 3 3.800 5.600 7 6.600 1.800.5 3.300-.4 3.500-2l-2.700-1.500-1.300 1.300c-2-.8-3.600-2.400-4.400-4.200l1-1.300z" fill="#fff" />
      </Svg>
      <AppBadge $bg="#c3a8dc">4</AppBadge>
    </AppButton>
    <AppButton $running>
      <ChromeLogo />
      <AppBadge $bg="#f3bccb">
        <Svg w={16}>
          <path d="M4 5l2-1.500M9.500 5l2.500 1M5 11l2-1M11 12l1.500-2" stroke="#cf6f8a" strokeWidth="1.600" />
          <path d="M6 7.500h3M2 8l2 1" stroke="#fff" strokeWidth="1.300" />
        </Svg>
      </AppBadge>
    </AppButton>
    <Tray>
      <Slot $w={24}><Svg w={12} h={7}><path d="M.5 6.500L6 1l5.500 5.500" stroke="#fff" strokeWidth="1.300" /></Svg></Slot>
      <Slot $w={24}>
        <Svg w={16} h={11}>
          <path d="M3 8a4 4 0 0 1 1-6 4.500 4.500 0 0 1 7.500 1L14 7z" fill="#a9a9cc" />
          <path d="M3.500 11a3.300 3.300 0 0 1 0-6.500c1.500 0 2.500.5 3.500 1.500l4-1.500c3 0 5 1.500 5 3.500a3 3 0 0 1-3 3z" fill="#f3f3fa" />
        </Svg>
      </Slot>
      <Slot $w={44}><Text $size={11.3} $color="#fff">ESP</Text></Slot>
      <Slot $w={32}>
        <Svg w={16} h={12}>
          <path d="M.8 4.500a10.200 10.200 0 0 1 14.400 0M3.200 7a6.800 6.800 0 0 1 9.600 0M5.500 9.300a3.500 3.500 0 0 1 5 0" stroke="#fff" strokeWidth="1.300" strokeLinecap="round" />
          <circle cx="8" cy="11" r="1.200" fill="#fff" />
        </Svg>
      </Slot>
      <Slot $w={14}>
        <Svg w={16} h={12}>
          <path d="M.6 4H3l4-3.300V11.300L3 8H.6z" stroke="#fff" strokeWidth="1.100" strokeLinejoin="round" />
          <path d="M9 4a3 3 0 0 1 0 4" stroke="#fff" />
          <path d="M11 2.300a5.500 5.500 0 0 1 0 7.400M13 .8a8 8 0 0 1 0 10.400" stroke="#6f6da6" />
        </Svg>
      </Slot>
      <Slot $w={36}>
        <Svg w={16} h={10}>
          <rect x=".6" y=".6" width="12.800" height="8.800" rx="2" stroke="#fff" strokeWidth="1.200" />
          <rect x="2.300" y="2.300" width="9.400" height="5.400" rx=".5" fill="#fff" />
          <path d="M15 3.500v3" stroke="#fff" strokeWidth="1.600" strokeLinecap="round" />
        </Svg>
      </Slot>
      <Clock>14:30<br />23/2/2023</Clock>
      <Slot>
        <Svg w={14} h={15}>
          <path d="M7 1C3.500 1 2 3 2 5.500V9.500L.5 11.500H12.500L11 9.500V7L8.500 6z" fill="#fff" />
          <path d="M4 13h5a2.500 2 0 0 1-5 0z" fill="#fff" />
          <path d="M9.500 1h3.200L9.800 4.500H13" stroke="#fff" strokeWidth="1.200" />
          <path d="M5 5.500h2.800L5 9h3" stroke="#1c1a6e" strokeWidth="1.100" />
        </Svg>
      </Slot>
    </Tray>
  </TaskbarRow>
);

export default function App() {
  return (
    <Screen>
      <Global />
      <Tabs />
      <AddressBar />
      <Toolbar />
      <Workspace>
        <EditorPane />
        <TemplatesPanel />
        <Scrollbar>
          <Svg w={8} h={4}><path d="M0 4l4-4 4 4z" fill="#a3a3a3" /></Svg>
          <Thumb />
          <Svg w={8} h={4}><path d="M0 0l4 4 4-4z" fill="#505050" /></Svg>
        </Scrollbar>
      </Workspace>
      <Taskbar />
    </Screen>
  );
}
